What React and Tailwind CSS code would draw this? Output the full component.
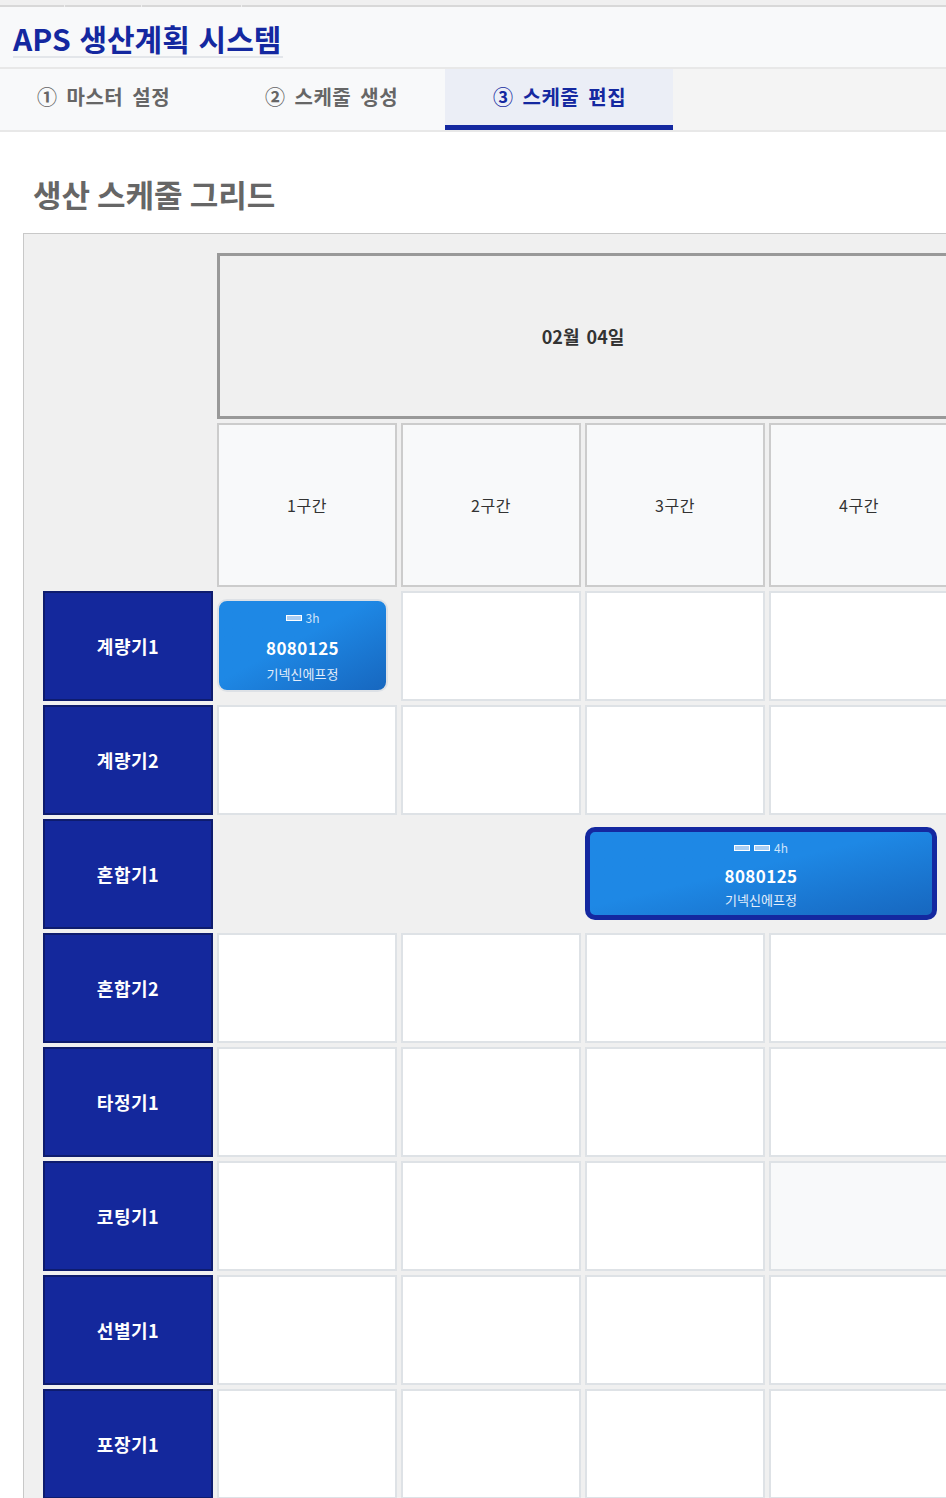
const sections = ["1구간", "2구간", "3구간", "4구간"];

const machines = [
  { name: "계량기1", jobs: [{ col: 1, span: 1, hours: 3 }] },
  { name: "계량기2" },
  { name: "혼합기1", jobs: [{ col: 3, span: 2, hours: 4, selected: true }] },
  { name: "혼합기2" },
  { name: "타정기1" },
  { name: "코팅기1", muted: [4] },
  { name: "선별기1" },
  { name: "포장기1" },
];

function JobBlock({ hours, bars, selected, wide }) {
  return (
    <div
      className={`h-[93px] flex flex-col items-center justify-center rounded-[10px] bg-linear-to-br from-[#1e88e5] from-45% to-[#1767bf] text-white ${
        selected ? "border-[5px] border-[#1428a0]" : "border-2 border-[#dde1e6]"
      } ${wide ? "mr-[12px]" : "mr-[9px]"}`}
    >
      <div className="flex items-center gap-1 text-[12px] leading-none text-[#cfe4fb]">
        {Array.from({ length: bars }).map((_, i) => (
          <span key={i} className="w-4 h-[6px] bg-[#a9cdf3] border border-white" />
        ))}
        <span>{hours}h</span>
      </div>
      <div
        className={`${selected ? "mt-[13px]" : "mt-[15px]"} text-[17px] font-bold leading-none tracking-[0.4px]`}
      >
        8080125
      </div>
      <div
        className={`${selected ? "mt-[9px]" : "mt-[11px]"} text-[13px] leading-none text-[#e3eefb]`}
      >
        기넥신에프정
      </div>
    </div>
  );
}

export default function App() {
  return (
    <div className="w-full h-screen overflow-hidden bg-white font-['Noto_Sans_CJK_KR','Noto_Sans',sans-serif]">
      {/* top strip */}
      <div className="flex gap-px h-[7px] bg-[#f0f0f0]">
        <div className="w-[64px] border-b-2 border-[#d8d8d8]" />
        <div className="w-[76px] border-b-2 border-[#d8d8d8]" />
        <div className="w-[99px] border-b-2 border-[#d8d8d8]" />
        <div className="flex-1 border-b-2 border-[#d8d8d8]" />
      </div>

      {/* header */}
      <header className="h-[62px] bg-[#f8f9fa] border-b-2 border-[#e8e8e8] pl-[13px] pt-[14px]">
        <h1 className="inline-block text-[30px] font-bold leading-[35px] [word-spacing:2px] text-[#1428a0] border-b-2 border-[#e3e6ea] pr-[2px]">
          APS 생산계획 시스템
        </h1>
      </header>

      {/* tabs */}
      <nav className="flex h-[63px] bg-[#f4f4f4] border-b-2 border-[#e8e8e8] text-[20px] font-bold tracking-[0.5px] [word-spacing:4px]">
        <div className="w-[217px] bg-[#f8f9fa] pl-[37px] pb-[5px] flex items-center text-[#666]">
          ① 마스터 설정
        </div>
        <div className="w-[228px] bg-[#f8f9fa] pl-[48px] pb-[5px] flex items-center text-[#666]">
          ② 스케줄 생성
        </div>
        <div className="w-[228px] bg-[#ebeef6] pl-[48px] flex items-center text-[#1428a0] border-b-[5px] border-[#1428a0]">
          ③ 스케줄 편집
        </div>
      </nav>

      {/* main */}
      <main className="pl-[23px] pt-[40px]">
        <h2 className="pl-[10px] text-[31px] font-bold leading-[44px] text-[#666] mb-[17px]">
          생산 스케줄 그리드
        </h2>

        <div className="w-max bg-[#f0f0f0] border border-[#c8c8c8] p-[19px]">
          <div className="grid grid-cols-[170px_repeat(4,180px)] gap-1">
            {/* date header */}
            <div />
            <div className="col-span-4 h-[166px] border-[3px] border-[#999] bg-[#f0f0f0] flex items-center justify-center text-[18px] font-bold [word-spacing:3px] text-[#333]">
              02월 04일
            </div>

            {/* section headers */}
            <div />
            {sections.map((s) => (
              <div
                key={s}
                className="h-[164px] border-2 border-[#cccccc] bg-[#f8f9fa] flex items-center justify-center text-[16px] tracking-[0.5px] text-[#333]"
              >
                {s}
              </div>
            ))}

            {/* machine rows */}
            {machines.map((m) => {
              const cells = [];
              const jobs = m.jobs || [];
              const hasWide = jobs.some((j) => j.span > 1);
              for (let c = 1; c <= 4; c++) {
                const job = jobs.find((j) => j.col === c);
                if (job) {
                  cells.push(
                    <div key={c} className={`${job.span === 2 ? "col-span-2" : ""} h-[110px] pt-2`}>
                      <JobBlock
                        hours={job.hours}
                        bars={job.span}
                        selected={job.selected}
                        wide={job.span > 1}
                      />
                    </div>
                  );
                  c += job.span - 1;
                } else if (hasWide) {
                  cells.push(<div key={c} className="h-[110px]" />);
                } else {
                  cells.push(
                    <div
                      key={c}
                      className={`h-[110px] border-2 border-[#dee2e6] ${
                        m.muted && m.muted.includes(c) ? "bg-[#f8f9fa]" : "bg-white"
                      }`}
                    />
                  );
                }
              }
              return [
                <div
                  key={m.name}
                  className="h-[110px] bg-[#14289c] border-2 border-[#0e1c6e] flex items-center justify-center text-[18px] font-bold tracking-[0.5px] text-white"
                >
                  {m.name}
                </div>,
                ...cells,
              ];
            })}
          </div>
        </div>
      </main>
    </div>
  );
}
